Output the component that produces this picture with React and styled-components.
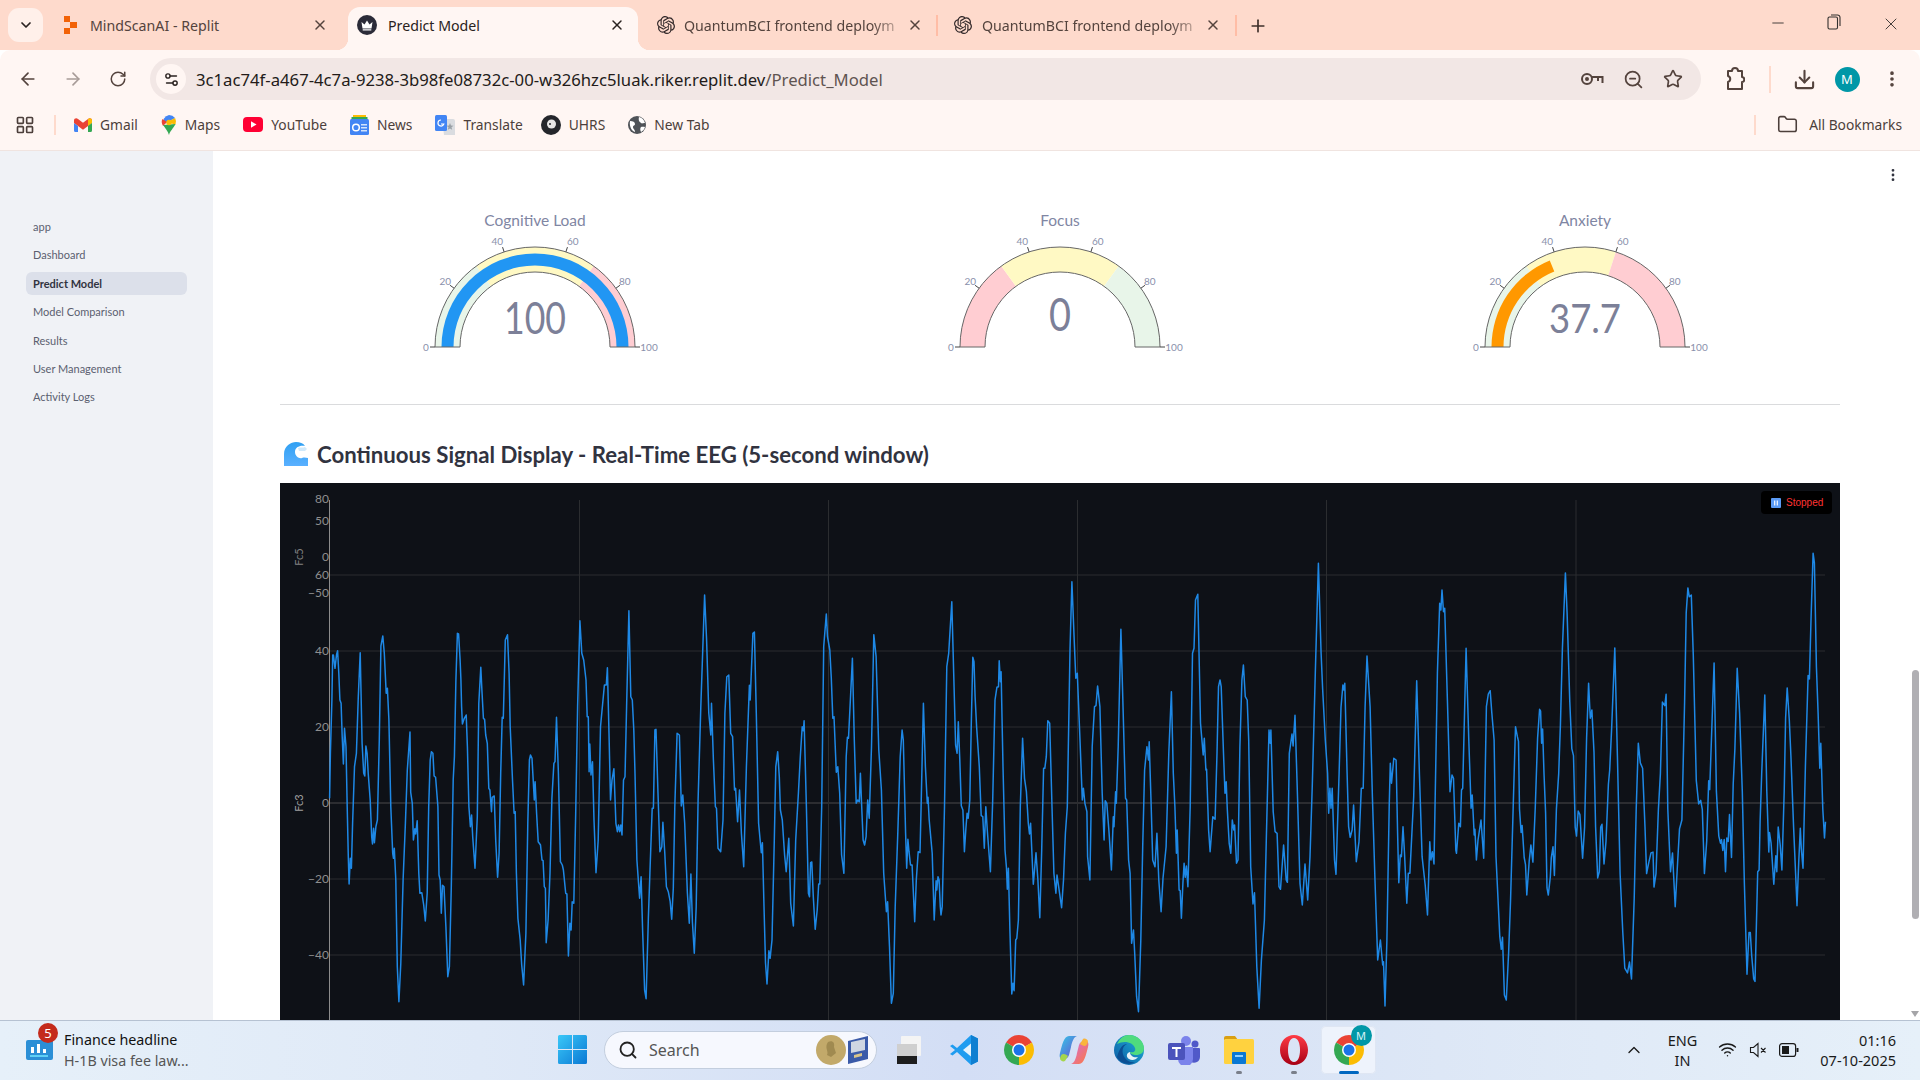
import React from 'react';
import styled, { createGlobalStyle } from 'styled-components';
import {
  ArrowLeft, ArrowRight, RotateCw, X, Plus, ChevronDown, ChevronUp, Minus, Star, Download,
  EllipsisVertical, Folder, Search, Wifi, ZoomOut, Settings2, LayoutGrid,
} from 'lucide-react';
import { SiOpenai } from 'react-icons/si';

const UI = '"Noto Sans", "Open Sans", sans-serif';
const APP = 'Lato, "Noto Sans", sans-serif';

const GlobalStyle = createGlobalStyle`
  html, body { margin: 0; padding: 0; overflow: hidden; background: #fff; }
  * { box-sizing: border-box; }
`;

const Screen = styled.div`
  width: 1920px;
  height: 1080px;
  display: flex;
  flex-direction: column;
  overflow: hidden;
  font-family: ${UI};
`;

/* browser tabs */
const TabStrip = styled.div`
  height: 50px;
  flex: none;
  display: flex;
  align-items: flex-end;
  background: #fedacc;
  padding-left: 8px;
  color: #54433d;
`;
const TabMenu = styled.div`
  width: 35px;
  height: 34px;
  margin: 0 5px 8px 0;
  border-radius: 11px;
  background: #fff0ea;
  display: flex;
  align-items: center;
  justify-content: center;
  color: #2a2220;
`;
const Tab = styled.div`
  position: relative;
  width: ${p => p.$w}px;
  height: 43px;
  display: flex;
  align-items: center;
  padding: 0 ${p => p.$pr}px 7px ${p => p.$pl}px;
  font-size: 14.2px;
  border-radius: 12px 12px 0 0;
  background: ${p => (p.$active ? '#fff6f3' : 'transparent')};
  color: ${p => (p.$active ? '#2a2220' : '#54433d')};
  ${p => p.$active && `
    &::before, &::after {
      content: '';
      position: absolute;
      bottom: 0;
      width: 12px;
      height: 12px;
    }
    &::before { left: -12px; background: radial-gradient(circle at 0 0, transparent 12px, #fff6f3 12.5px); }
    &::after { right: -12px; background: radial-gradient(circle at 100% 0, transparent 12px, #fff6f3 12.5px); }
  `}
`;
const TabIcon = styled.span`
  width: 20px;
  flex: none;
  display: flex;
  justify-content: center;
`;
const TabTitle = styled.span`
  flex: 1;
  margin-left: ${p => p.$gap}px;
  white-space: nowrap;
  ${p => p.$fade && `mask-image: linear-gradient(90deg, #000 84%, rgba(0, 0, 0, 0.25) 97%);`}
`;
const TabSep = styled.div`
  width: 2px;
  height: 21px;
  margin: 0 0 14px -1px;
  background: #ffbda6;
  flex: none;
`;
const NewTab = styled.div`
  margin: 0 0 14px 11px;
  display: flex;
  color: #3e2f2a;
`;
const WindowControls = styled.div`
  margin-left: auto;
  display: flex;
  align-self: flex-start;
  padding-top: 14px;
  color: #33302e;
`;
const WinBtn = styled.div`
  width: ${p => p.$w}px;
  display: flex;
  justify-content: center;
`;

/* toolbar */
const Toolbar = styled.div`
  height: 50px;
  flex: none;
  display: flex;
  align-items: center;
  padding: 8px 0 0 5px;
  background: #fff6f3;
  border-radius: 10px 10px 0 0;
  color: #54433d;
`;
const NavBtn = styled.div`
  width: 45px;
  display: flex;
  justify-content: center;
  color: ${p => (p.$off ? '#a89c98' : '#54433d')};
`;
const Omnibox = styled.div`
  width: 1551px;
  height: 42px;
  margin-left: 10px;
  border-radius: 21px;
  background: #f2e7e5;
  display: flex;
  align-items: center;
  padding: 0 18px 0 6px;
`;
const SiteBadge = styled.div`
  width: 30px;
  height: 30px;
  border-radius: 50%;
  background: #fff6f3;
  display: flex;
  align-items: center;
  justify-content: center;
  color: #2a2220;
`;
const Url = styled.div`
  margin-left: 10px;
  font-size: 16.7px;
  color: #231b19;
  white-space: nowrap;
  span { color: #5f5451; }
`;
const OmniIcons = styled.div`
  margin-left: auto;
  display: flex;
  gap: 19px;
  align-items: center;
`;
const ToolSlot = styled.div`
  width: ${p => p.$w}px;
  margin-left: ${p => p.$ml || 0}px;
  display: flex;
  justify-content: center;
`;
const ToolSep = styled.div`
  width: 2px;
  height: 27px;
  flex: none;
  background: #fedacc;
`;
const Avatar = styled.div`
  width: 25px;
  height: 25px;
  flex: none;
  border-radius: 50%;
  background: #0097a7;
  color: #fff;
  font-size: 13px;
  display: flex;
  align-items: center;
  justify-content: center;
`;

/* bookmarks */
const Bookmarks = styled.div`
  height: 51px;
  flex: none;
  display: flex;
  align-items: center;
  padding: 0 18px 1px 15px;
  background: #fff6f3;
  border-bottom: 1px solid #f0e4e0;
  color: #4c3f3b;
  font-size: 13.8px;
`;
const BookSep = styled.div`
  width: 2px;
  height: 20px;
  background: #fedacc;
  margin: ${p => p.$m};
`;
const Bookmark = styled.div`
  display: flex;
  align-items: center;
  gap: 8px;
  margin-right: ${p => p.$mr || 23}px;
  white-space: nowrap;
`;
const AllBookmarks = styled(Bookmark)`
  margin: 0;
  gap: 11px;
`;

/* page */
const Body = styled.div`
  flex: 1;
  min-height: 0;
  display: flex;
`;
const Sidebar = styled.nav`
  width: 213px;
  flex: none;
  background: #f0f2f6;
  padding: 64px 26px 0;
  display: flex;
  flex-direction: column;
  gap: 5.4px;
  font-family: ${APP};
  font-size: 11px;
`;
const NavItem = styled.div`
  height: 23px;
  padding-left: 7px;
  display: flex;
  align-items: center;
  border-radius: 6px;
  color: ${p => (p.$active ? '#31333f' : '#5b5f70')};
  font-weight: ${p => (p.$active ? 700 : 400)};
  background: ${p => (p.$active ? '#dce0ea' : 'transparent')};
`;
const Main = styled.main`
  position: relative;
  flex: 1;
  min-width: 0;
  overflow: hidden;
  background: #fff;
  padding: 49px 80px 0 67px;
  font-family: ${APP};
`;
const Kebab = styled.div`
  position: absolute;
  top: 16px;
  right: 19px;
  display: flex;
  color: #31333f;
`;
const GaugeRow = styled.div`
  display: grid;
  grid-template-columns: repeat(3, 500px);
  gap: 25px;
  padding-left: 5px;
`;
const GaugeSvg = styled.svg`
  display: block;
  width: 500px;
  height: 175px;
`;
const Rule = styled.hr`
  margin: 29px 0 0;
  border: 0;
  border-top: 1px solid #dadbdd;
`;
const Heading = styled.h3`
  margin: 34px 0 0;
  height: 30px;
  display: flex;
  align-items: center;
  gap: 8px;
  padding-left: 4px;
  font-size: 22.2px;
  font-weight: 700;
  color: #31333f;
  white-space: nowrap;
`;
const ChartPanel = styled.div`
  position: relative;
  height: 537px;
  margin-top: 14px;
  background: #0e1117;
`;
const ChartSvg = styled.svg`
  display: block;
  width: 1560px;
  height: 537px;
  font-family: ${APP};
`;
const StatusBadge = styled.div`
  position: absolute;
  top: 8px;
  right: 8px;
  width: 71px;
  height: 23px;
  border-radius: 4px;
  background: #000;
  display: flex;
  align-items: center;
  gap: 5px;
  padding-left: 10px;
  color: #ff3333;
  font: 10px "Liberation Sans", sans-serif;
`;
const ScrollThumb = styled.div`
  position: absolute;
  top: 519px;
  right: 1px;
  width: 7px;
  height: 249px;
  border-radius: 4px;
  background: #b0afb3;
`;
const ScrollArrow = styled.div`
  position: absolute;
  right: 1px;
  bottom: 3px;
  width: 0;
  height: 0;
  border: 4px solid transparent;
  border-top: 6px solid #a5a5a8;
  border-bottom: 0;
`;

/* taskbar */
const Taskbar = styled.footer`
  height: 60px;
  flex: none;
  display: flex;
  align-items: center;
  padding-bottom: 2px;
  background: linear-gradient(90deg, #e6f0f9 0%, #dfe9f7 25%, #d3def5 50%, #dde7f6 75%, #e6f0f9 100%);
  border-top: 1px solid #b6c2d2;
  color: #111;
`;
const News = styled.div`
  position: relative;
  width: 558px;
  flex: none;
  display: flex;
  align-items: center;
  padding-left: 26px;
  gap: 11px;
`;
const NewsBadge = styled.div`
  position: absolute;
  left: 38px;
  top: -6px;
  width: 20px;
  height: 20px;
  border-radius: 50%;
  background: #c42b1c;
  color: #fff;
  font-size: 13px;
  display: flex;
  align-items: center;
  justify-content: center;
`;
const NewsText = styled.div`
  font-size: 14.3px;
  line-height: 21px;
  white-space: nowrap;
  small { display: block; font-size: 14.3px; color: #555; }
`;
const SearchBox = styled.div`
  width: 273px;
  height: 38px;
  margin-left: 17px;
  border-radius: 19px;
  background: #f6f8fe;
  border: 1px solid #c3cede;
  display: flex;
  align-items: center;
  padding: 0 8px 0 13px;
  gap: 11px;
  font-size: 16px;
  color: #555;
`;
const SearchArt = styled.div`
  margin-left: auto;
  display: flex;
`;
const AppIcons = styled.div`
  display: flex;
  margin-left: 4px;
`;
const AppIcon = styled.div`
  position: relative;
  width: 55px;
  height: 48px;
  display: flex;
  align-items: center;
  justify-content: center;
  border-radius: 5px;
  ${p => p.$active && 'background: #eef3fc; box-shadow: inset 0 0 0 1px #dfe6f3;'}
  &::after {
    content: '';
    position: absolute;
    display: ${p => (p.$state ? 'block' : 'none')};
    bottom: 0;
    height: 3px;
    border-radius: 2px;
    left: 50%;
    transform: translateX(-50%);
    width: ${p => (p.$state === 'active' ? 20 : 6)}px;
    background: ${p => (p.$state === 'active' ? '#0067c0' : '#7a7f8a')};
  }
`;
const Tray = styled.div`
  margin-left: auto;
  display: flex;
  align-items: center;
  padding-right: 24px;
  font-size: 14.5px;
  color: #1a1a1a;
`;
const Lang = styled.div`
  margin: 0 21px 0 24px;
  text-align: center;
  line-height: 20px;
`;
const TrayIcons = styled.div`
  display: flex;
  align-items: center;
  gap: 12px;
  margin-right: 21px;
`;
const Clock = styled.div`
  text-align: right;
  line-height: 20px;
`;

const bt = (s, f) => s.trim().split(/\s+/).map(p => f(...p.split(',').map(Number)));
const z1 = (a, b) => [325 + a / 2.613, 540 + b / 3];
const z2 = (a, b) => [920 + a / 2.613, 540 + b / 3];
const z3 = (a, b) => [1500 + a / 2.98, 470 + b / 2.8];

// traced from the reference, three runs of the same line
const SIGNAL_A = `12,775 14,640 18,480 20,345 22,345 26,385 30,345 33,332 36,400 39,480 42,490 45,590 48,672 51,565 55,620 58,800 61,950 63,1032 66,955 69,985 72,850 77,680 82,640 87,470 92,338 97,610 101,700 104,708 107,618 110,640 113,700 118,780 122,890 124,912 127,865 129,908 133,860 137,840 142,600 146,318 151,288 155,340 160,460 163,445 167,540 172,800 177,940 179,955 181,925 185,1020 189,1280 193,1385 198,1270 204,1020 210,850 215,690 222,576 224,757 228,790 231,900 235,866 237,882 241,842 245,1000 248,1060 253,1058 258,1095 262,1143 267,1060 271,800 275,660 278,635 282,640 285,708 289,712 295,800 298,1005 301,1020 304,1120 307,1036 311,1040 316,1160 321,1310 325,1280 330,1040 335,720 338,650 342,420 346,280 349,282 353,360 355,418 357,500 359,552 364,535 369,525 372,620 376,800 380,860 383,825 386,890 392,985 398,830 402,490 407,382 410,450 414,535 417,538 420,585 424,610 428,745 431,750 435,815 437,772 442,768 446,900 451,1012 455,940 459,700 463,532 466,535 471,300 477,284 481,400 484,560 490,720 494,820 497,815 500,1000 504,1135 510,1200 514,1275 519,1335 525,1180 530,850 534,660 537,645 541,655 547,780 549,725 553,820 557,905 563,915 567,960 570,962 573,1040 576,1045 578,1208 583,1140 588,1000 593,775 598,670 601,665 605,532 610,700 615,965 620,975 623,990 629,1060 632,1062 636,1248 640,1150 643,1170 646,1085 650,1090 655,820 660,500 666,242 671,340 676,360 682,420 685,530 688,530 690,695 692,612 695,705 699,665 703,840 708,998 711,950 714,900 720,560 730,435 735,435 738,383 742,580 746,780 750,720 755,686 760,850 764,875 767,855 770,875 773,855 776,885 780,720 784,710 788,500 794,212 799,470 803,480 807,570 810,700 815,960 822,1075 826,1010 830,1170 835,1350 839,1376 845,1130 849,1000 855,805 858,805 862,570 865,568 870,760 875,935 880,920 883,847 888,940 892,1040 897,1055 902,1085 906,1138 910,1045 914,800 920,580 926,585 931,798 935,765 940,850 947,1060 952,1150 956,1002 960,1145 965,1240 970,1100 975,780 982,500 986,370 992,165 997,300 1003,520 1008,585 1010,490 1015,660 1020,800 1023,805 1027,925 1034,935 1040,840 1045,520 1050,410 1055,405 1060,580 1065,590 1070,750 1073,745 1078,845 1083,750 1088,880 1094,980 1101,680 1109,436 1111,480 1118,280 1122,276 1127,520 1133,850 1140,938 1143,908 1147,1100 1151,1268 1155,1332 1160,1232 1163,1255 1168,1200 1174,900 1178,680 1183,635 1187,710 1190,810 1195,840 1201,945 1205,995 1212,895 1217,1090 1224,1158 1230,900 1237,760 1242,650 1247,560 1250,572 1252,542 1258,800 1263,1060 1266,1070 1269,968 1272,966 1276,1070 1281,1168 1286,1110 1290,1032 1293,1032 1298,800 1303,320 1310,222 1313,290 1319,330 1323,415 1327,535 1330,530 1336,697 1340,680 1345,760 1350,945 1356,1000 1362,650 1365,592 1368,595 1378,355 1383,600 1388,790 1392,780 1396,785 1399,700 1402,785 1406,900 1410,915 1414,890 1418,780 1422,835 1428,620 1434,284 1440,350 1447,630 1454,750 1460,1000 1467,1115 1470,1085 1475,1220 1480,1390 1485,1360 1490,1100 1497,870 1503,650 1508,570 1511,600 1517,880 1520,985 1523,898 1526,935 1530,975 1534,975 1541,1145 1545,1020 1550,935`;
const SIGNAL_B = `0,938 3,800 9,490 14,680 19,790 21,772 24,840 32,940 37,1140 42,1022 44,1050 47,1010 50,1020 53,1100 55,1125 58,1100 64,800 70,380 75,340 83,185 88,400 93,615 97,640 100,545 104,660 108,797 112,810 116,935 120,865 123,820 126,835 130,780 134,550 138,352 141,365 144,470 148,560 155,680 160,827 164,830 168,925 172,800 176,875 184,995 190,780 196,480 201,442 205,440 207,362 210,425 212,395 217,680 222,930 226,985 228,1048 231,985 235,1170 240,1362 243,1330 246,1352 250,1200 253,1195 257,1140 262,800 268,595 273,715 278,755 283,850 286,882 289,850 296,1033 303,938 308,1020 313,1133 318,930 323,685 326,685 330,650 334,542 339,550 345,800 350,1000 355,1060 358,1005 363,1045 370,1103 375,1020 380,880 385,800 392,330 397,125 403,300 407,415 411,400 418,600 424,780 427,745 431,790 436,815 438,950 444,1020 450,620 456,500 460,497 464,438 470,500 476,760 481,900 484,782 488,790 494,880 500,990 505,830 507,860 511,755 513,790 518,620 525,268 531,520 537,775 540,780 545,960 549,1000 553,1210 558,1170 561,1240 566,1370 571,1415 577,1200 582,920 587,690 593,620 597,660 599,605 604,800 608,960 614,980 619,880 624,1020 630,1115 635,1015 643,920 650,640 657,455 662,700 666,800 670,940 672,870 677,1050 680,1052 683,1135 687,1030 690,970 693,1012 696,978 700,1040 706,800 712,340 716,325 720,180 726,163 733,550 740,645 743,595 747,690 749,688 754,870 758,935 765,830 771,838 776,640 780,440 784,420 787,440 793,640 797,760 800,725 803,808 808,910 812,940 816,840 820,870 822,855 827,970 831,960 836,620 841,420 845,375 850,470 855,480 859,600 864,980 870,1092 874,1058 880,1280 886,1405 892,1260 900,1140 905,900 912,570 915,610 917,570 923,815 928,875 933,880 938,1040 942,1048 950,915 957,1020 960,1027 965,640 972,582 975,618 980,526 986,750 993,1030 999,1095 1006,972 1013,1080 1019,950 1025,735 1033,400 1041,70 1048,340 1052,445 1059,600 1065,700 1068,820 1071,745 1074,805 1077,745 1083,960 1087,1003 1095,700 1100,502 1105,435 1108,450 1110,430 1116,700 1120,860 1124,892 1129,870 1133,795 1140,965 1147,905 1153,745 1158,745 1163,500 1168,348 1176,500 1182,770 1189,1022 1196,1260 1203,1200 1209,1275 1211,1265 1215,1398 1220,1200 1226,800 1229,670 1232,730 1238,655 1244,660 1248,880 1251,1028 1255,945 1258,950 1262,860 1266,940 1272,1090 1276,1000 1280,1000 1290,770 1298,422 1305,700 1312,950 1320,1035 1326,1125 1332,905 1335,960 1339,935 1343,972 1352,400 1358,190 1361,210 1364,150 1368,215 1371,205 1378,480 1385,755 1390,705 1394,715 1400,930 1402,940 1408,850 1412,860 1415,750 1418,745 1427,325 1434,600 1440,805 1443,765 1448,885 1450,868 1454,960 1458,900 1466,840 1473,955 1480,500 1485,462 1490,452 1494,518 1500,600 1505,950 1515,1190 1519,1228 1522,1192 1527,1365 1532,1380 1538,1240 1543,1085 1550,800 1556,560 1561,590`;
const SIGNAL_C = `55,760 58,950 63,1015 66,995 72,1085 76,1105 80,1190 87,1095 92,1050 98,1098 105,950 112,750 118,670 121,675 124,765 127,725 131,850 136,960 140,1170 144,1190 150,1140 153,1085 158,1055 162,1135 168,950 175,850 180,715 186,500 195,288 200,400 208,650 214,780 219,800 224,1000 228,1025 233,955 238,965 246,1087 252,1000 258,750 264,597 269,695 274,672 280,790 285,1000 291,1142 296,1125 300,1000 304,992 310,1103 316,1040 323,880 327,840 333,720 342,498 350,800 358,1130 366,1295 372,1395 380,1408 386,1378 392,1425 400,1200 406,950 412,765 418,820 425,835 432,1000 437,1130 443,1100 450,1072 456,1070 459,1168 465,1130 472,950 478,850 484,650 491,660 495,628 500,950 508,1125 514,1072 522,1223 528,1120 535,1005 542,980 550,650 555,400 560,330 564,355 570,350 576,520 585,870 592,935 598,925 603,950 609,1130 616,1040 622,870 625,895 632,700 638,540 645,900 652,1025 657,1045 660,1035 664,1065 668,1035 672,1125 676,1030 680,1040 684,965 690,1085 695,880 700,780 707,555 714,680 722,900 728,1150 736,1412 742,1295 746,1295 750,1360 756,1425 760,1432 768,1125 772,1120 775,985 780,850 789,630 795,900 801,1070 803,1015 808,1045 816,1160 822,1080 825,1125 829,1000 835,1050 840,1120 847,900 851,695 856,610 862,700 867,800 875,1000 885,1220 890,1100 895,1003 898,1060 903,1115 910,830 918,575 922,585 927,410 933,233 937,260 943,550 948,680 953,835 956,765 962,950 967,1030 970,985`;

const SIGNAL = [...bt(SIGNAL_A, z1), ...bt(SIGNAL_B, z2), ...bt(SIGNAL_C, z3)]
  .map(([x, y]) => `${x.toFixed(1)},${y.toFixed(1)}`).join(' ');

const NAV = ['app', 'Dashboard', 'Predict Model', 'Model Comparison', 'Results', 'User Management', 'Activity Logs'];
const GREEN = '#e8f5e9';
const YELLOW = '#fff9c4';
const RED = '#ffcdd2';
const GAUGES = [
  { title: 'Cognitive Load', value: 100, label: '100', size: 44, len: 62, y: 134, bar: '#2196f3', steps: [[0, 30, GREEN], [30, 70, YELLOW], [70, 100, RED]] },
  { title: 'Focus', value: 0, label: '0', size: 47, len: 22, y: 131, steps: [[0, 30, RED], [30, 70, YELLOW], [70, 100, GREEN]] },
  { title: 'Anxiety', value: 37.7, label: '37.7', size: 41, len: 72, y: 133, bar: '#ff9800', steps: [[0, 30, GREEN], [30, 60, YELLOW], [60, 100, RED]] },
];
const TICK_LABEL = { 0: [109, 0], 20: [111, 0], 40: [111, -3.5], 60: [111, 3.5], 80: [111, 0], 100: [114, 0] };

const CX = 250;
const CY = 147;
const polar = (v, r) => {
  const a = Math.PI * (1 - v / 100);
  return [CX + r * Math.cos(a), CY - r * Math.sin(a)];
};
const band = (from, to, r0, r1) => {
  const [ax, ay] = polar(from, r1);
  const [bx, by] = polar(to, r1);
  const [cx, cy] = polar(to, r0);
  const [dx, dy] = polar(from, r0);
  return `M${ax} ${ay}A${r1} ${r1} 0 0 1 ${bx} ${by}L${cx} ${cy}A${r0} ${r0} 0 0 0 ${dx} ${dy}Z`;
};

const Gauge = ({ title, value, label, size, len, y, bar, steps }) => (
  <GaugeSvg viewBox="0 0 500 175">
    <text x={CX} y="26" textAnchor="middle" fontSize="15.5" fill="#7f86a3">{title}</text>
    {steps.map(([a, b, c]) => <path key={a} d={band(a, b, 75, 100)} fill={c} />)}
    {bar && value > 0 && <path d={band(0, value, 81.5, 93.5)} fill={bar} />}
    <path d={band(0, 100, 75, 100)} fill="none" stroke="#666" strokeWidth="1" />
    {[0, 20, 40, 60, 80, 100].map(t => {
      const [x0, y0] = polar(t, 100);
      const [x1, y1] = polar(t, 105);
      const [r, shift] = TICK_LABEL[t];
      const [lx, ly] = polar(t, r);
      return (
        <g key={t}>
          <line x1={x0} y1={y0} x2={x1} y2={y1} stroke="#444" strokeWidth="1" />
          <text x={lx + shift} y={ly + 3.5} textAnchor="middle" fontSize="10" fill="#8a90ab">{t}</text>
        </g>
      );
    })}
    <text x={CX} y={y} textAnchor="middle" fontSize={size} fill="#7c8098" textLength={len} lengthAdjust="spacingAndGlyphs">{label}</text>
  </GaugeSvg>
);

const wedge = (a0, a1, r = 12) => {
  const p = a => [12 + r * Math.cos(a * Math.PI / 180), 12 + r * Math.sin(a * Math.PI / 180)];
  const [ax, ay] = p(a0);
  const [bx, by] = p(a1);
  return `M12 12L${ax} ${ay}A${r} ${r} 0 0 1 ${bx} ${by}Z`;
};
const ChromeLogo = ({ size = 28 }) => (
  <svg width={size} height={size} viewBox="0 0 24 24">
    <path d={wedge(-150, -30)} fill="#ea4335" />
    <path d={wedge(-30, 90)} fill="#fbbc04" />
    <path d={wedge(90, 210)} fill="#34a853" />
    <circle cx="12" cy="12" r="5.6" fill="#fff" />
    <circle cx="12" cy="12" r="4.4" fill="#1a73e8" />
  </svg>
);

const ReplitIcon = () => (
  <svg width="14" height="18" viewBox="0 0 14 18">
    <path d="M1 0h6v6H1zM7 6h7v6H7zM1 12h6v6H1z" fill="#f26207" />
  </svg>
);
const CrownIcon = () => (
  <svg width="20" height="20" viewBox="0 0 20 20">
    <circle cx="10" cy="10" r="10" fill="#2b2b38" />
    <path d="M4.5 7l3 2.4L10 5.5l2.5 3.9 3-2.4-1 6.5h-9zM5.7 14.2h8.6v1.2H5.7z" fill="#fff" />
  </svg>
);
const RestoreIcon = () => (
  <svg width="14" height="16" viewBox="0 0 14 16" fill="none" stroke="#33302e" strokeWidth="1.1">
    <rect x="1" y="3" width="9.5" height="12" rx="1.5" />
    <path d="M4 1h6.5A2.5 2.5 0 0 1 13 3.500V12" />
  </svg>
);
const KeyIcon = () => (
  <svg width="24" height="16" viewBox="0 0 24 16" fill="none" stroke="#54433d" strokeWidth="2">
    <circle cx="7" cy="8" r="5" />
    <circle cx="7" cy="8" r="1" fill="#54433d" />
    <path d="M12 6h10.500v6M18 6v4" />
  </svg>
);
const ExtensionIcon = () => (
  <svg width="20" height="26" viewBox="0 0 20 26" fill="none" stroke="#54433d" strokeWidth="2">
    <path d="M3 5h4c0-4 6-4 6 0h4v6c3 0 3 5 0 5v7H3v-7c3-1 3-5 0-6z" strokeLinejoin="round" />
  </svg>
);
const GmailIcon = () => (
  <svg width="18" height="14" viewBox="0 0 18 14">
    <path d="M0 2.500V5l4 3 5 3.700L14 8l4-3V2.500C18 .6 15.800 -.4 14 1L9 4.700 4 1C2.200 -.4 0 .6 0 2.500z" fill="#ea4335" />
    <path d="M14 1v7l4-3V2.500C18 .6 15.800 -.4 14 1z" fill="#fbbc04" />
    <path d="M0 5v7.500A1.500 1.500 0 0 0 1.500 14H4V8z" fill="#4285f4" />
    <path d="M18 5v7.500a1.500 1.500 0 0 1-1.500 1.500H14V8z" fill="#34a853" />
  </svg>
);
const MapsIcon = () => (
  <svg width="16" height="20" viewBox="0 0 16 20">
    <path d="M8 0a8 8 0 0 1 6.100 2.900L2 9.500A8 8 0 0 1 8 0z" fill="#4285f4" />
    <path d="M1.500 4L6 7 2 11C.8 9 0 6 1.500 4z" fill="#ea4335" />
    <path d="M14.100 2.900A8 8 0 0 1 14.500 9.500L8 8 10 5z" fill="#fbbc04" />
    <path d="M2 10l12.500-1C12 14 9 16 8 20 7 16 4 13 2 10z" fill="#34a853" />
    <circle cx="8" cy="7.500" r="2.700" fill="#fbbc04" />
  </svg>
);
const YoutubeIcon = () => (
  <svg width="20" height="15" viewBox="0 0 20 15">
    <rect width="20" height="15" rx="4" fill="#ff0033" />
    <path d="M8 4.200v6.600l5.500-3.300z" fill="#fff" />
  </svg>
);
const NewsIcon = () => (
  <svg width="19" height="20" viewBox="0 0 19 20">
    <path d="M3 0h13v5H3z" fill="#fbbc04" />
    <path d="M1.500 2h16v5h-16z" fill="#34a853" />
    <rect y="4" width="19" height="16" rx="1.500" fill="#4285f4" />
    <path d="M11 9h6v1.500h-6zM11 12h6v1.500h-6zM11 15h6v1.500h-6z" fill="#d2e3fc" />
    <circle cx="6" cy="12.500" r="3.300" fill="none" stroke="#fff" strokeWidth="1.500" />
  </svg>
);
const TranslateIcon = () => (
  <svg width="20" height="20" viewBox="0 0 20 20">
    <path d="M7 4h11a2 2 0 0 1 2 2v14H9z" fill="#dadce0" />
    <path d="M15 8l1 2.500 2.500.2-2 1.500.7 2.500-2.200-1.300-2.200 1.300.7-2.500-2-1.500 2.500-.2z" fill="#9aa0a6" />
    <rect width="12" height="16" rx="1.500" fill="#4285f4" />
    <path d="M6 5a3 3 0 1 0 2.800 4H6" fill="none" stroke="#fff" strokeWidth="1.200" />
  </svg>
);
const UhrsIcon = () => (
  <svg width="20" height="20" viewBox="0 0 20 20">
    <circle cx="10" cy="10" r="10" fill="#24262b" />
    <circle cx="10.500" cy="9" r="4.500" fill="#e6e6e6" />
    <circle cx="9" cy="9" r="1" fill="#24262b" />
  </svg>
);
const GlobeIcon = () => (
  <svg width="18" height="18" viewBox="0 0 18 18">
    <circle cx="9" cy="9" r="9" fill="#4f5358" />
    <path d="M2 5c3 0 5 1 5 3s-2 1-2 3 2 2 2 5c-3-1-6-5-5-11zM11 1c3 .5 5 3 6 6-2 0-3 1-4 0s-3-2-2-6zM13 11c2-.5 3 0 4 0-.5 2-2 4-4 5-1-2-1-4 0-5z" fill="#fff" />
  </svg>
);
const WaveIcon = () => (
  <svg width="25" height="24" viewBox="0 0 25 24">
    <defs>
      <linearGradient id="wave" x1="0" y1="0" x2="0" y2="1">
        <stop offset="0" stopColor="#2fa0f2" />
        <stop offset="1" stopColor="#5ab0ff" />
      </linearGradient>
    </defs>
    <path d="M0 24V12C0 4 7 0 12 0c4 0 7 1 9 4-5-1-10 1-10 6 0 4 4 7 7 6 3-1 4 0 6 0v8z" fill="url(#wave)" />
    <path d="M14 6c2-1 5 0 7-1l2 2-2 2-6 0z" fill="#cfe9fb" />
  </svg>
);
const PauseIcon = () => (
  <svg width="10" height="10" viewBox="0 0 10 10">
    <rect width="10" height="10" rx="1" fill="#5b9bf5" />
    <path d="M3 2.500h1.300v5H3zM5.700 2.500H7v5H5.700z" fill="#e8f0fe" />
  </svg>
);

const WidgetsIcon = () => (
  <svg width="27" height="20" viewBox="0 0 27 20">
    <rect width="27" height="20" rx="2" fill="#2b8fd6" />
    <path d="M5 7h3v6H5zM11 4h3v9h-3zM17 9h3v4h-3z" fill="#fff" />
    <path d="M4 15h18v2H4z" fill="#5fd0f5" />
  </svg>
);
const StartIcon = () => (
  <svg width="29" height="29" viewBox="0 0 29 29">
    <defs>
      <linearGradient id="start" x1="0" y1="0" x2="1" y2="1">
        <stop offset="0" stopColor="#3ac8f8" />
        <stop offset="1" stopColor="#0a78d4" />
      </linearGradient>
    </defs>
    <path d="M0 1.500A1.500 1.500 0 0 1 1.500 0H14v14H0zM15 0h12.500A1.500 1.500 0 0 1 29 1.500V14H15zM0 15h14v14H1.500A1.500 1.500 0 0 1 0 27.500zM15 15h14v12.500a1.500 1.500 0 0 1-1.500 1.500H15z" fill="url(#start)" />
  </svg>
);
const MedalArt = () => (
  <svg width="52" height="30" viewBox="0 0 52 30">
    <ellipse cx="15" cy="15" rx="15" ry="15" fill="#c2a96a" />
    <path d="M12 7c4-2 7 0 6 5l2 6-5 4-4-2c2-4-3-7 1-13z" fill="#a08a50" />
    <path d="M32 6l20-5v23l-20 5z" fill="#3a5aa8" />
    <path d="M35 7l14-3v11l-14 3z" fill="#cfd6e2" />
    <path d="M38 20l8-2v3l-8 2z" fill="#d9c48a" />
  </svg>
);
const WindowStackIcon = () => (
  <svg width="24" height="28" viewBox="0 0 24 28">
    <rect x="0" y="8" width="20" height="20" fill="#1e1e1e" />
    <rect x="4" y="0" width="20" height="20" rx="1" fill="#f4f4f4" />
    <rect x="0" y="8" width="20" height="12" fill="#cfcfcf" />
  </svg>
);
const VscodeIcon = () => (
  <svg width="28" height="30" viewBox="0 0 28 30">
    <path d="M21 0l7 3.400v23.200L21 30 7 17l-4.500 3.500L0 19l5-4L0 11l2.500-1.500L7 13z" fill="#1f9cf0" />
    <path d="M21 8.500L13 15l8 6.500z" fill="#e3f2fd" />
    <path d="M21 0l7 3.400v23.200L21 30z" fill="#0f7fd1" />
  </svg>
);
const CopilotIcon = () => (
  <svg width="30" height="30" viewBox="0 0 30 30">
    <defs>
      <linearGradient id="cpa" x1="0" y1="0" x2="1" y2="1">
        <stop offset="0" stopColor="#34c8e8" />
        <stop offset="1" stopColor="#6a4fd0" />
      </linearGradient>
      <linearGradient id="cpb" x1="0" y1="0" x2="1" y2="1">
        <stop offset="0" stopColor="#d26ae0" />
        <stop offset="1" stopColor="#ff7a3c" />
      </linearGradient>
    </defs>
    <path d="M10 1h8c-3 1-5 5-6 11l-2 8c-1 3-3 4-6 4-3 0-4-2-3-6C3 10 5 1 10 1z" fill="url(#cpa)" />
    <path d="M20 29h-8c3-1 5-5 6-11l2-8c1-3 3-4 6-4 3 0 4 2 3 6-2 8-4 17-9 17z" fill="url(#cpb)" />
    <path d="M1 24c1-7 5-5 8-3l-3 5c-2 1-4 0-5-2z" fill="#a5d64c" />
    <path d="M29 6c-1 7-5 5-8 3l3-5c2-1 4 0 5 2z" fill="#f9b53c" />
  </svg>
);
const EdgeIcon = () => (
  <svg width="30" height="30" viewBox="0 0 30 30">
    <defs>
      <linearGradient id="edge" x1="0" y1="1" x2="1" y2="0">
        <stop offset="0" stopColor="#0c59a4" />
        <stop offset="1" stopColor="#1fb4d8" />
      </linearGradient>
    </defs>
    <circle cx="15" cy="15" r="15" fill="url(#edge)" />
    <path d="M15 0c9 0 15 7 15 13 0 5-4 7-8 7-3 0-6-1-6-3 4 1 6-1 5-4-2-6-11-8-18-4C6 3 10 0 15 0z" fill="#4fdb7e" />
    <path d="M13 9c-5 2-6 9-2 14 2 3 6 5 10 4-6 4-15 1-18-5C6 12 9 9 13 9z" fill="#0b4f93" />
    <path d="M16 17c0 4 4 6 8 5-2 3-6 4-9 2-3-2-3-6 1-7z" fill="#fff" opacity=".9" />
  </svg>
);
const TeamsIcon = () => (
  <svg width="32" height="30" viewBox="0 0 32 30">
    <circle cx="18" cy="6" r="5" fill="#7b83eb" />
    <circle cx="27" cy="9" r="3.500" fill="#5059c9" />
    <path d="M22 13h9a1 1 0 0 1 1 1v8a6 6 0 0 1-9 5z" fill="#5059c9" />
    <path d="M10 12h15v12a6 6 0 0 1-15 0z" fill="#7b83eb" />
    <rect x="0" y="8" width="17" height="17" rx="2" fill="#4b53bc" />
    <path d="M4 12h9v2h-3.500v8h-2v-8H4z" fill="#fff" />
  </svg>
);
const ExplorerIcon = () => (
  <svg width="30" height="28" viewBox="0 0 30 28">
    <path d="M0 2a2 2 0 0 1 2-2h9l3 4H0z" fill="#d99f12" />
    <rect y="3" width="30" height="25" rx="1.500" fill="#ffd23f" />
    <rect x="8" y="16" width="14" height="12" rx="1" fill="#0a78d4" />
    <rect x="11" y="19" width="8" height="2" fill="#8ed0ff" />
  </svg>
);
const OperaIcon = () => (
  <svg width="28" height="30" viewBox="0 0 28 30">
    <defs>
      <linearGradient id="opera" x1="0" y1="0" x2="0" y2="1">
        <stop offset="0" stopColor="#ff3b45" />
        <stop offset="1" stopColor="#a70014" />
      </linearGradient>
    </defs>
    <path fillRule="evenodd" d="M14 0c8 0 14 6.500 14 15s-6 15-14 15S0 23.500 0 15 6 0 14 0zm0 3c-4 0-6 5.500-6 12s2 12 6 12 6-5.500 6-12-2-12-6-12z" fill="url(#opera)" />
  </svg>
);
const ActiveChrome = styled.div`
  position: relative;
  display: flex;
`;
const ChromeProfile = styled.div`
  position: absolute;
  top: -10px;
  right: -8px;
  width: 21px;
  height: 21px;
  border-radius: 50%;
  background: #0097a7;
  color: #d7f3f6;
  font-size: 11px;
  display: flex;
  align-items: center;
  justify-content: center;
`;
const SpeakerMuteIcon = () => (
  <svg width="18" height="18" viewBox="0 0 18 18" fill="none" stroke="#1a1a1a" strokeWidth="1.100">
    <path d="M1.500 6.500h3L9 2.500v13l-4.500-4h-3zM12 7l4.500 4.500M16.500 7L12 11.500" />
  </svg>
);
const BatteryIcon = () => (
  <svg width="20" height="14" viewBox="0 0 20 14" fill="none" stroke="#1a1a1a" strokeWidth="1.200">
    <rect x=".6" y=".6" width="16" height="12.800" rx="2.500" />
    <rect x="3" y="3" width="7" height="8" fill="#1a1a1a" stroke="none" />
    <path d="M18.500 5v4" strokeWidth="2" />
  </svg>
);

const BrowserTab = ({ icon, title, w, pl, pr, gap, active, fade }) => (
  <Tab $w={w} $pl={pl} $pr={pr} $active={active}>
    <TabIcon>{icon}</TabIcon>
    <TabTitle $gap={gap} $fade={fade}>{title}</TabTitle>
    <X size={16} strokeWidth={2.2} />
  </Tab>
);

const GptIcon = () => <SiOpenai size={18} color="#33292a" />;

const App = () => (
  <Screen>
    <GlobalStyle />
    <TabStrip>
      <TabMenu><ChevronDown size={16} strokeWidth={2.6} /></TabMenu>
      <BrowserTab icon={<ReplitIcon />} title="MindScanAI - Replit" w={300} pl={12} pr={20} gap={10} />
      <BrowserTab icon={<CrownIcon />} title="Predict Model" w={290} pl={9} pr={13} gap={11} active />
      <BrowserTab icon={<GptIcon />} title="QuantumBCI frontend deploym" w={299} pl={18} pr={14} gap={8} fade />
      <TabSep />
      <BrowserTab icon={<GptIcon />} title="QuantumBCI frontend deploym" w={298} pl={15} pr={15} gap={9} fade />
      <TabSep />
      <NewTab><Plus size={20} strokeWidth={2} /></NewTab>
      <WindowControls>
        <WinBtn $w={56}><Minus size={18} strokeWidth={1.2} /></WinBtn>
        <WinBtn $w={55}><RestoreIcon /></WinBtn>
        <WinBtn $w={59}><X size={20} strokeWidth={1.1} /></WinBtn>
      </WindowControls>
    </TabStrip>

    <Toolbar>
      <NavBtn><ArrowLeft size={20} /></NavBtn>
      <NavBtn $off><ArrowRight size={20} /></NavBtn>
      <NavBtn><RotateCw size={18} /></NavBtn>
      <Omnibox>
        <SiteBadge><Settings2 size={17} /></SiteBadge>
        <Url>3c1ac74f-a467-4c7a-9238-3b98fe08732c-00-w326hzc5luak.riker.replit.dev<span>/Predict_Model</span></Url>
        <OmniIcons>
          <KeyIcon />
          <ZoomOut size={21} />
          <Star size={20} strokeWidth={2} />
        </OmniIcons>
      </Omnibox>
      <ToolSlot $w={68}><ExtensionIcon /></ToolSlot>
      <ToolSep />
      <ToolSlot $w={66}><Download size={23} strokeWidth={2.2} /></ToolSlot>
      <ToolSlot $w={20}><Avatar>M</Avatar></ToolSlot>
      <ToolSlot $w={44} $ml={13}><EllipsisVertical size={20} strokeWidth={2.4} /></ToolSlot>
    </Toolbar>

    <Bookmarks>
      <LayoutGrid size={20} />
      <BookSep $m="0 18px 0 19px" />
      <Bookmark><GmailIcon />Gmail</Bookmark>
      <Bookmark><MapsIcon />Maps</Bookmark>
      <Bookmark><YoutubeIcon />YouTube</Bookmark>
      <Bookmark><NewsIcon />News</Bookmark>
      <Bookmark $mr={18}><TranslateIcon />Translate</Bookmark>
      <Bookmark><UhrsIcon />UHRS</Bookmark>
      <Bookmark><GlobeIcon />New Tab</Bookmark>
      <BookSep $m="0 21px 0 auto" />
      <AllBookmarks><Folder size={21} strokeWidth={1.8} />All Bookmarks</AllBookmarks>
    </Bookmarks>

    <Body>
      <Sidebar>
        {NAV.map(n => <NavItem key={n} $active={n === 'Predict Model'}>{n}</NavItem>)}
      </Sidebar>
      <Main>
        <Kebab><EllipsisVertical size={16} strokeWidth={2.2} /></Kebab>
        <GaugeRow>
          {GAUGES.map(g => <Gauge key={g.title} {...g} />)}
        </GaugeRow>
        <Rule />
        <Heading><WaveIcon />Continuous Signal Display - Real-Time EEG (5-second window)</Heading>
        <ChartPanel>
          <ChartSvg viewBox="280 483 1560 537">
            {[575, 651, 727, 803, 879, 955].map(y => (
              <line key={y} x1="329" x2="1825" y1={y} y2={y} stroke={y === 803 ? '#4a4b4d' : '#2b2d30'} />
            ))}
            {[579.5, 828.5, 1077.5, 1326.5, 1576].map(x => (
              <line key={x} x1={x} x2={x} y1="500" y2="1020" stroke="#2b2d30" />
            ))}
            <line x1="329.500" x2="329.500" y1="500" y2="1020" stroke="#8c8c8c" />
            {[['80', 503], ['50', 525], ['0', 561], ['60', 579], ['−50', 597], ['40', 655], ['20', 731], ['0', 807], ['−20', 883], ['−40', 959]].map(([t, y]) => (
              <text key={t + y} x="329" y={y} textAnchor="end" fontSize="12" fill="#8f8f8f">{t}</text>
            ))}
            <text transform="rotate(-90 303 557)" x="303" y="557" textAnchor="middle" fontSize="11" fill="#808080">Fc5</text>
            <text transform="rotate(-90 303 803)" x="303" y="803" textAnchor="middle" fontSize="11" fill="#a0a0a0">Fc3</text>
            <polyline points={SIGNAL} fill="none" stroke="#1e88e5" strokeWidth="1.500" strokeLinejoin="round" />
          </ChartSvg>
          <StatusBadge><PauseIcon />Stopped</StatusBadge>
        </ChartPanel>
        <ScrollThumb />
        <ScrollArrow />
      </Main>
    </Body>

    <Taskbar>
      <News>
        <WidgetsIcon />
        <NewsBadge>5</NewsBadge>
        <NewsText>Finance headline<small>H-1B visa fee law...</small></NewsText>
      </News>
      <StartIcon />
      <SearchBox>
        <Search size={20} color="#222" strokeWidth={2.2} />
        Search
        <SearchArt><MedalArt /></SearchArt>
      </SearchBox>
      <AppIcons>
        <AppIcon><WindowStackIcon /></AppIcon>
        <AppIcon><VscodeIcon /></AppIcon>
        <AppIcon><ChromeLogo size={30} /></AppIcon>
        <AppIcon><CopilotIcon /></AppIcon>
        <AppIcon><EdgeIcon /></AppIcon>
        <AppIcon><TeamsIcon /></AppIcon>
        <AppIcon $state="open"><ExplorerIcon /></AppIcon>
        <AppIcon $state="open"><OperaIcon /></AppIcon>
        <AppIcon $active $state="active">
          <ActiveChrome>
            <ChromeLogo size={30} />
            <ChromeProfile>M</ChromeProfile>
          </ActiveChrome>
        </AppIcon>
      </AppIcons>
      <Tray>
        <ChevronUp size={20} strokeWidth={1.6} />
        <Lang>ENG<br />IN</Lang>
        <TrayIcons>
          <Wifi size={19} strokeWidth={1.8} />
          <SpeakerMuteIcon />
          <BatteryIcon />
        </TrayIcons>
        <Clock>01:16<br />07-10-2025</Clock>
      </Tray>
    </Taskbar>
  </Screen>
);

export default App;
